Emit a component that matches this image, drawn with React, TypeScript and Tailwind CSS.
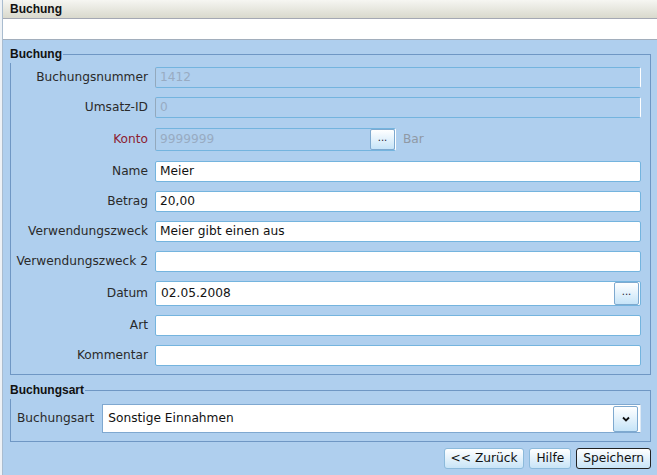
import React from "react";

type Row = {
  label: string;
  value?: string;
  disabled?: boolean;
  red?: boolean;
  kind?: "konto" | "date";
};

const rows: Row[] = [
  { label: "Buchungsnummer", value: "1412", disabled: true },
  { label: "Umsatz-ID", value: "0", disabled: true },
  { label: "Konto", value: "9999999", disabled: true, red: true, kind: "konto" },
  { label: "Name", value: "Meier" },
  { label: "Betrag", value: "20,00" },
  { label: "Verwendungszweck", value: "Meier gibt einen aus" },
  { label: "Verwendungszweck 2" },
  { label: "Datum", value: "02.05.2008", kind: "date" },
  { label: "Art" },
  { label: "Kommentar" },
];

function DotsButton({ tall }: { tall?: boolean }) {
  return (
    <span
      className={`flex w-[25px] shrink-0 items-center justify-center rounded-[2px] border border-[#7ea9cf] bg-gradient-to-b from-[#ffffff] to-[#c6e4f8] pb-[3px] text-[10px] leading-none text-[#223] ${
        tall ? "h-[23px]" : "h-[21px]"
      }`}
    >
      ...
    </span>
  );
}

function Field({ row }: { row: Row }) {
  const base = "flex items-center rounded-[2px] border pl-[4px] leading-none";
  const look = row.disabled
    ? "border-[#74b4de] border-l-[#93a9bd] border-r-white bg-[#afcfee] text-[#98abc2]"
    : "border-[#74b4de] bg-white text-[#111]";

  if (row.kind === "konto") {
    return (
      <div className="flex h-[25px] items-center gap-[7px]">
        <div className={`${base} ${look} h-[23px] w-[241px] justify-between pr-0`}>
          <span>{row.value}</span>
          <DotsButton />
        </div>
        <span className="text-[#8f99a5]">Bar</span>
      </div>
    );
  }
  if (row.kind === "date") {
    return (
      <div className="flex h-[25px] items-center">
        <div className={`${base} ${look} h-[25px] flex-1 justify-between border-[#8ab0d4] pl-[5px] pr-[1px]`}>
          <span>{row.value}</span>
          <DotsButton tall />
        </div>
      </div>
    );
  }
  return (
    <div className={`${base} ${look} h-[21px]`}>
      <span>{row.value ?? ""}</span>
    </div>
  );
}

function Btn({ children, focus }: { children: React.ReactNode; focus?: boolean }) {
  return (
    <span
      className={`flex h-[21px] items-center rounded-[3px] border bg-gradient-to-b from-[#ffffff] to-[#c8e4f7] px-[6px] text-[#111] ${
        focus ? "border-[#222]" : "border-[#8cbadb]"
      }`}
    >
      {children}
    </span>
  );
}

export default function App() {
  return (
    <div className="h-[475px] w-[657px] overflow-hidden bg-[#eef2f6] pl-[2px] font-['DejaVu_Sans',sans-serif] text-[12.2px] text-[#2a2a2a]">
      <div className="flex h-full flex-col border-l border-[#a9bccf]">
        <div className="flex h-[19px] items-center border-b border-[#a4a8b4] bg-gradient-to-b from-[#f6f6f2] to-[#d9d9cd] pl-[7px] font-['Liberation_Sans',sans-serif] text-[12px] font-bold text-[#111]">
          Buchung
        </div>
        <div className="h-[21px] border-b border-[#a2aebc] bg-white" />
        <div className="flex flex-1 flex-col bg-[#afcfee] pl-[7px] pr-[6px] pt-[5px]">
          <fieldset className="border border-[#6f97c4] pb-[8px] pl-[0px] pr-[9px] pt-[4px]">
            <legend className="ml-[-1px] pr-[1px] font-['Liberation_Sans',sans-serif] text-[12px] font-bold text-[#111]">
              Buchung
            </legend>
            <div className="grid grid-cols-[137px_1fr] items-center gap-x-[7px] gap-y-[9px]">
              {rows.map((r) => (
                <React.Fragment key={r.label}>
                  <span className={`text-right ${r.red ? "text-[#8c2030]" : ""}`}>{r.label}</span>
                  <Field row={r} />
                </React.Fragment>
              ))}
            </div>
          </fieldset>
          <fieldset className="mt-[6px] border border-[#6f97c4] pb-[8px] pl-[6px] pr-[9px] pt-[5px]">
            <legend className="ml-[-7px] pr-[1px] font-['Liberation_Sans',sans-serif] text-[12px] font-bold text-[#111]">
              Buchungsart
            </legend>
            <div className="flex items-center gap-[8px]">
              <span>Buchungsart</span>
              <div className="flex h-[29px] flex-1 items-center justify-between border border-[#7fa8d0] border-r-[#dde9f5] bg-white pl-[5px] pr-[2px] text-[#111]">
                <span>Sonstige Einnahmen</span>
                <span className="flex h-[26px] w-[25px] items-center justify-center rounded-[2px] border border-[#7ea9cf] bg-gradient-to-b from-[#ffffff] to-[#c6e4f8]">
                  <svg width="8" height="6" viewBox="0 0 8 6">
                    <path d="M1 1.5 L4 4.5 L7 1.5" stroke="#111" strokeWidth="1.8" fill="none" />
                  </svg>
                </span>
              </div>
            </div>
          </fieldset>
          <div className="mt-[6px] flex justify-end gap-[5px]">
            <Btn>&lt;&lt; Zurück</Btn>
            <Btn>Hilfe</Btn>
            <Btn focus>Speichern</Btn>
          </div>
        </div>
      </div>
    </div>
  );
}
